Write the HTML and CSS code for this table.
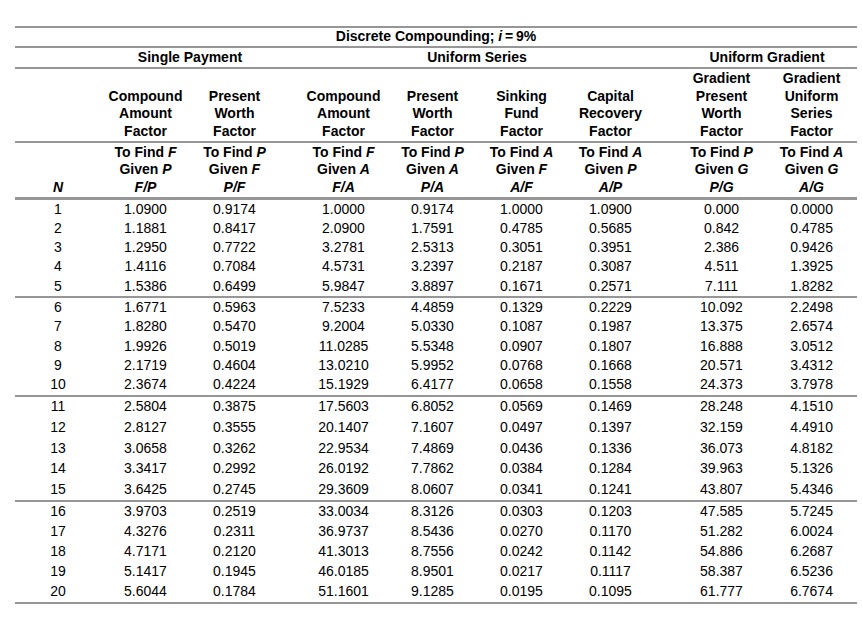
FILE: index.html
```
<!DOCTYPE html>
<html>
<head>
<meta charset="utf-8">
<link rel="stylesheet" href="styles.css">
</head>
<body>
<table class="tbl">
<colgroup>
<col class="c-n"><col class="c-d"><col class="c-d"><col class="c-g"><col class="c-d"><col class="c-d"><col class="c-d"><col class="c-g2"><col class="c-last">
</colgroup>
<thead>
<tr class="r-title"><th colspan="9">Discrete Compounding; <i>i</i>&#8201;=&#8201;9%</th></tr>
<tr class="r-group"><th></th><th colspan="2">Single Payment</th><th colspan="4" class="g1">Uniform Series</th><th colspan="2" class="g2">Uniform Gradient</th></tr>
<tr class="r-factor">
<th></th>
<th>Compound<br>Amount<br>Factor</th>
<th>Present<br>Worth<br>Factor</th>
<th class="g1">Compound<br>Amount<br>Factor</th>
<th>Present<br>Worth<br>Factor</th>
<th>Sinking<br>Fund<br>Factor</th>
<th>Capital<br>Recovery<br>Factor</th>
<th class="g2">Gradient<br>Present<br>Worth<br>Factor</th>
<th>Gradient<br>Uniform<br>Series<br>Factor</th>
</tr>
<tr class="r-given">
<th><i>N</i></th>
<th>To Find <i>F</i><br>Given <i>P</i><br><i>F/P</i></th>
<th>To Find <i>P</i><br>Given <i>F</i><br><i>P/F</i></th>
<th class="g1">To Find <i>F</i><br>Given <i>A</i><br><i>F/A</i></th>
<th>To Find <i>P</i><br>Given <i>A</i><br><i>P/A</i></th>
<th>To Find <i>A</i><br>Given <i>F</i><br><i>A/F</i></th>
<th>To Find <i>A</i><br>Given <i>P</i><br><i>A/P</i></th>
<th class="g2">To Find <i>P</i><br>Given <i>G</i><br><i>P/G</i></th>
<th>To Find <i>A</i><br>Given <i>G</i><br><i>A/G</i></th>
</tr>
</thead>
<tbody class="b1">
<tr><td>1</td><td>1.0900</td><td>0.9174</td><td class="g1">1.0000</td><td>0.9174</td><td>1.0000</td><td>1.0900</td><td class="g2">0.000</td><td>0.0000</td></tr>
<tr><td>2</td><td>1.1881</td><td>0.8417</td><td class="g1">2.0900</td><td>1.7591</td><td>0.4785</td><td>0.5685</td><td class="g2">0.842</td><td>0.4785</td></tr>
<tr><td>3</td><td>1.2950</td><td>0.7722</td><td class="g1">3.2781</td><td>2.5313</td><td>0.3051</td><td>0.3951</td><td class="g2">2.386</td><td>0.9426</td></tr>
<tr><td>4</td><td>1.4116</td><td>0.7084</td><td class="g1">4.5731</td><td>3.2397</td><td>0.2187</td><td>0.3087</td><td class="g2">4.511</td><td>1.3925</td></tr>
<tr><td>5</td><td>1.5386</td><td>0.6499</td><td class="g1">5.9847</td><td>3.8897</td><td>0.1671</td><td>0.2571</td><td class="g2">7.111</td><td>1.8282</td></tr>
</tbody>
<tbody class="b2">
<tr><td>6</td><td>1.6771</td><td>0.5963</td><td class="g1">7.5233</td><td>4.4859</td><td>0.1329</td><td>0.2229</td><td class="g2">10.092</td><td>2.2498</td></tr>
<tr><td>7</td><td>1.8280</td><td>0.5470</td><td class="g1">9.2004</td><td>5.0330</td><td>0.1087</td><td>0.1987</td><td class="g2">13.375</td><td>2.6574</td></tr>
<tr><td>8</td><td>1.9926</td><td>0.5019</td><td class="g1">11.0285</td><td>5.5348</td><td>0.0907</td><td>0.1807</td><td class="g2">16.888</td><td>3.0512</td></tr>
<tr><td>9</td><td>2.1719</td><td>0.4604</td><td class="g1">13.0210</td><td>5.9952</td><td>0.0768</td><td>0.1668</td><td class="g2">20.571</td><td>3.4312</td></tr>
<tr><td>10</td><td>2.3674</td><td>0.4224</td><td class="g1">15.1929</td><td>6.4177</td><td>0.0658</td><td>0.1558</td><td class="g2">24.373</td><td>3.7978</td></tr>
</tbody>
<tbody class="b3">
<tr><td>11</td><td>2.5804</td><td>0.3875</td><td class="g1">17.5603</td><td>6.8052</td><td>0.0569</td><td>0.1469</td><td class="g2">28.248</td><td>4.1510</td></tr>
<tr><td>12</td><td>2.8127</td><td>0.3555</td><td class="g1">20.1407</td><td>7.1607</td><td>0.0497</td><td>0.1397</td><td class="g2">32.159</td><td>4.4910</td></tr>
<tr><td>13</td><td>3.0658</td><td>0.3262</td><td class="g1">22.9534</td><td>7.4869</td><td>0.0436</td><td>0.1336</td><td class="g2">36.073</td><td>4.8182</td></tr>
<tr><td>14</td><td>3.3417</td><td>0.2992</td><td class="g1">26.0192</td><td>7.7862</td><td>0.0384</td><td>0.1284</td><td class="g2">39.963</td><td>5.1326</td></tr>
<tr><td>15</td><td>3.6425</td><td>0.2745</td><td class="g1">29.3609</td><td>8.0607</td><td>0.0341</td><td>0.1241</td><td class="g2">43.807</td><td>5.4346</td></tr>
</tbody>
<tbody class="b4">
<tr><td>16</td><td>3.9703</td><td>0.2519</td><td class="g1">33.0034</td><td>8.3126</td><td>0.0303</td><td>0.1203</td><td class="g2">47.585</td><td>5.7245</td></tr>
<tr><td>17</td><td>4.3276</td><td>0.2311</td><td class="g1">36.9737</td><td>8.5436</td><td>0.0270</td><td>0.1170</td><td class="g2">51.282</td><td>6.0024</td></tr>
<tr><td>18</td><td>4.7171</td><td>0.2120</td><td class="g1">41.3013</td><td>8.7556</td><td>0.0242</td><td>0.1142</td><td class="g2">54.886</td><td>6.2687</td></tr>
<tr><td>19</td><td>5.1417</td><td>0.1945</td><td class="g1">46.0185</td><td>8.9501</td><td>0.0217</td><td>0.1117</td><td class="g2">58.387</td><td>6.5236</td></tr>
<tr><td>20</td><td>5.6044</td><td>0.1784</td><td class="g1">51.1601</td><td>9.1285</td><td>0.0195</td><td>0.1095</td><td class="g2">61.777</td><td>6.7674</td></tr>
</tbody>
</table>
</body>
</html>
```
FILE: styles.css
```
html, body {
  margin: 0;
  padding: 0;
  background: #fff;
}

.tbl {
  border-collapse: collapse;
  table-layout: fixed;
  width: 842px;
  margin: 26px 0 0 15px;
  font-family: "Liberation Sans", Arial, sans-serif;
  font-size: 14px;
  line-height: 17.5px;
  color: #000;
}

.c-n { width: 86px; }
.c-d { width: 89px; }
.c-g { width: 109px; }
.c-g2 { width: 111px; }
.c-last { width: 91px; }

.tbl th,
.tbl td {
  padding: 0;
  text-align: center;
}

.tbl th {
  font-weight: bold;
  vertical-align: bottom;
}

.tbl i {
  font-style: italic;
}

.tbl .g1 { padding-left: 20px; }
.tbl .g2 { padding-left: 22px; }

.r-title {
  border-top: 2px solid #969696;
  border-bottom: 2px solid #969696;
}
.r-title th {
  height: 18px;
  vertical-align: middle;
}

.r-group {
  border-bottom: 2px solid #969696;
}
.r-group th {
  height: 19px;
  vertical-align: middle;
}

.r-factor {
  border-bottom: 2px solid #969696;
}
.r-factor th {
  height: 71px;
  padding-bottom: 1px;
}

.r-given {
  border-bottom: 3px solid #969696;
}
.r-given th {
  height: 53px;
  padding-bottom: 1px;
}

.tbl td {
  vertical-align: middle;
}

.b1 td { height: 19.2px; }
.b2 td { height: 19.4px; }
.b3 td { height: 20.6px; }
.b4 td { height: 20px; }

.b2, .b3, .b4 {
  border-top: 2px solid #969696;
}
.b4 {
  border-bottom: 2px solid #969696;
}
```
